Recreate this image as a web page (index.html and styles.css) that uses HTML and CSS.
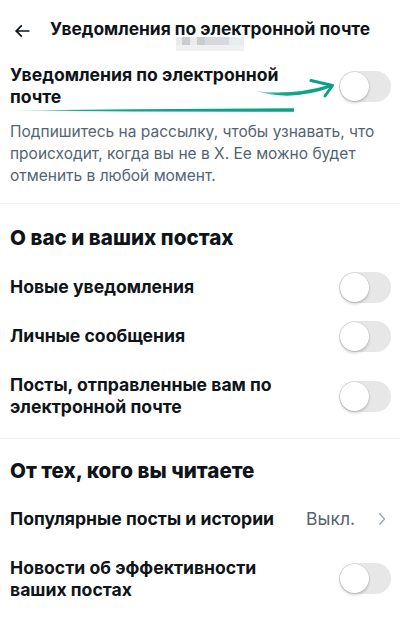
FILE: index.html
```html
<!DOCTYPE html>
<html lang="ru">
<head>
<meta charset="utf-8">
<link rel="stylesheet" href="styles.css">
</head>
<body>
<div class="page">
  <header class="header">
    <svg class="back" width="20" height="20" viewBox="0 0 24 24"><path d="M7.414 13l5.043 5.04-1.414 1.42L3.586 12l7.457-7.46 1.414 1.42L7.414 11H21v2H7.414z" fill="#0f1419"/></svg>
    <div class="title-block">
      <div class="title">Уведомления по электронной почте</div>
      <div class="subtitle">
        <span class="c l"></span><span class="c d"></span><span class="c l"></span><span class="c d"></span><span class="c m"></span><span class="c m"></span><span class="c l"></span>
        <span class="c b"></span><span class="c b"></span><span class="c b"></span><span class="c b"></span><span class="c b"></span><span class="c b"></span><span class="c b"></span>
      </div>
    </div>
  </header>

  <section class="master">
    <div class="row row-master">
      <div class="label">Уведомления по электронной почте</div>
      <span class="toggle"></span>
    </div>
    <p class="desc">Подпишитесь на рассылку, чтобы узнавать, что происходит, когда вы не в X. Ее можно будет отменить в любой момент.</p>
    <svg class="annot" width="400" height="70" viewBox="0 0 400 70">
      <defs>
        <linearGradient id="g1" x1="0" x2="1" y1="0" y2="0">
          <stop offset="0" stop-color="#12a98a" stop-opacity="0.15"/>
          <stop offset="0.25" stop-color="#10a98b"/>
          <stop offset="1" stop-color="#0aa086"/>
        </linearGradient>
        <linearGradient id="g2" x1="0" x2="1" y1="0" y2="0">
          <stop offset="0" stop-color="#12a98a" stop-opacity="0.3"/>
          <stop offset="0.3" stop-color="#10a98b"/>
          <stop offset="1" stop-color="#0aa086"/>
        </linearGradient>
      </defs>
      <path d="M10 54.5 Q150 53 294 52.3 L294 55.8 Q150 56 10 54.5 Z" fill="url(#g1)"/>
      <path d="M256 35 Q292 40 331 28.5 L332 31 Q292 46 256 35 Z" fill="url(#g2)"/>
      <path d="M311 24.5 L332.5 29.5 L325 40" fill="none" stroke="#0aa086" stroke-width="3" stroke-linecap="round" stroke-linejoin="round"/>
    </svg>
  </section>

  <section class="group">
    <h2 class="heading">О вас и ваших постах</h2>
    <div class="row"><div class="label">Новые уведомления</div><span class="toggle"></span></div>
    <div class="row"><div class="label">Личные сообщения</div><span class="toggle"></span></div>
    <div class="row"><div class="label">Посты, отправленные вам по электронной почте</div><span class="toggle"></span></div>
  </section>

  <section class="group">
    <h2 class="heading">От тех, кого вы читаете</h2>
    <div class="row"><div class="label">Популярные посты и истории</div><span class="value">Выкл.<svg class="chev" width="10" height="14" viewBox="0 0 10 14"><path d="M2.5 1.5 L7.5 7 L2.5 12.5" fill="none" stroke="#9aa6b0" stroke-width="1.4"/></svg></span></div>
    <div class="row"><div class="label">Новости об эффективности ваших постах</div><span class="toggle"></span></div>
  </section>
</div>
</body>
</html>
```

FILE: styles.css
```css
* { box-sizing: border-box; }
html, body { margin: 0; padding: 0; background: #fff; }
body {
  font-family: Inter, "Noto Sans", "DejaVu Sans", sans-serif;
  color: #0f1419;
  width: 400px;
  height: 619px;
  overflow: hidden;
}
.page { position: relative; }

.header {
  display: flex;
  align-items: flex-start;
  height: 56px;
  padding: 19px 0 0 12px;
}
.back { flex: none; margin-top: 2px; }
.title-block {
  margin-left: 18px;
  display: flex;
  flex-direction: column;
  align-items: center;
}
.title {
  font-size: 17.4px;
  font-weight: 700;
  line-height: 20px;
  white-space: nowrap;
}
.subtitle {
  display: grid;
  grid-template-columns: 6px 8px 7px 8px 9px 15px 15px;
  grid-template-rows: 8px 6px;
  margin-top: -2px;
}
.c { display: block; }
.c.l { background: #e9ebed; }
.c.d { background: #c9cdd1; }
.c.m { background: #d7dadd; }
.c.b { background: #eef0f1; }

.master {
  position: relative;
  padding: 8px 10px 16px;
  border-bottom: 1px solid #eff3f4;
}
.row {
  display: flex;
  align-items: center;
  justify-content: space-between;
  gap: 16px;
  padding: 13.5px 10px;
}
.master .row { padding: 0; }
.label {
  font-size: 17.6px;
  font-weight: 700;
  line-height: 22px;
  max-width: 290px;
}
.desc {
  margin: 13px 0 0;
  font-size: 15.5px;
  line-height: 22px;
  color: #536471;
}
.annot {
  position: absolute;
  left: 0;
  top: 0;
  pointer-events: none;
}

.toggle {
  flex: none;
  position: relative;
  width: 52px;
  height: 31px;
  margin: -5px -1px -5px 0;
  border-radius: 16px;
  background: #e7e7e8;
}
.master .toggle { margin-top: 0; margin-bottom: 0; }
.toggle::after {
  content: "";
  position: absolute;
  left: 1px;
  top: 1px;
  width: 29px;
  height: 29px;
  border-radius: 50%;
  background: #fff;
  box-shadow: 0 0 0 0.5px rgba(0,0,0,0.12), 0 2px 3px rgba(0,0,0,0.18);
}

.group {
  border-bottom: 1px solid #eff3f4;
  padding-bottom: 6px;
}
.group .heading {
  margin: 0;
  padding: 22px 10px 12.5px;
  font-size: 20.6px;
  font-weight: 800;
  line-height: 24px;
}
.group + .group .heading { padding-top: 20px; padding-bottom: 11.5px; }
.value {
  display: flex;
  align-items: center;
  gap: 22px;
  font-size: 17.5px;
  color: #536471;
  margin-right: 3px;
}
```
